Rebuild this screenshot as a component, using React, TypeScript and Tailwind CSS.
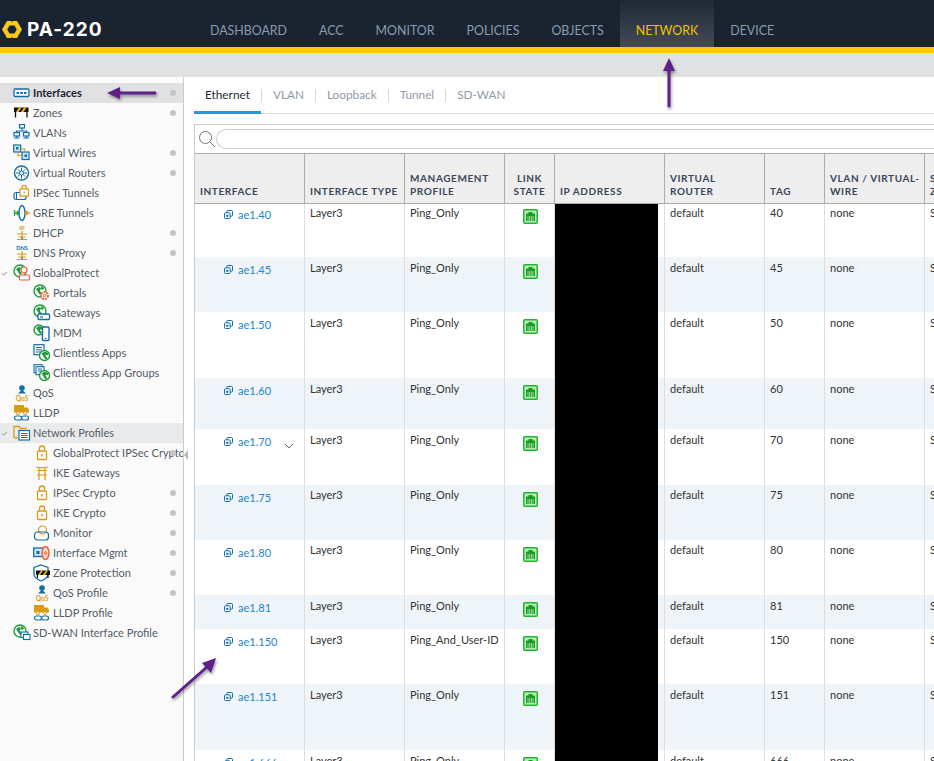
import type { ReactNode } from "react";

const BLUE = "#0f6ea6";
const GOLD = "#d99a14";
const GREEN = "#1f9b3c";
const RED = "#ee5f33";

const NAV = ["DASHBOARD", "ACC", "MONITOR", "POLICIES", "OBJECTS", "NETWORK", "DEVICE"];
const TABS = ["Ethernet", "VLAN", "Loopback", "Tunnel", "SD-WAN"];

function Ico({ children }: { children: ReactNode }) {
  return (
    <svg viewBox="0 0 18 18" width="18" height="18" fill="none" className="shrink-0">
      {children}
    </svg>
  );
}

const Globe = ({ x = 7, y = 7, r = 6 }: { x?: number; y?: number; r?: number }) => (
  <>
    <circle cx={x} cy={y} r={r} fill="#fff" stroke={GREEN} strokeWidth="1.4" />
    <path d={`M${x - r + 2} ${y - 2}l3-2 2 1-1 3 2 3-2 1-2-3z`} fill={GREEN} />
    <path d={`M${x + 1} ${y - r + 1}l3 2-1 2-2-1z`} fill={GREEN} />
  </>
);

const Lock = () => (
  <Ico>
    <rect x="4.5" y="7" width="9" height="8.5" rx="1" stroke={GOLD} strokeWidth="1.3" fill="#fff" />
    <path d="M6.5 7V4.5a2.5 2.5 0 0 1 5 0V7" stroke={GOLD} strokeWidth="1.3" />
    <rect x="8.2" y="10" width="1.6" height="2.5" fill={GOLD} />
  </Ico>
);

const Truck = () => (
  <Ico>
    <rect x="1" y="1" width="10" height="7.5" fill={GOLD} />
    <path d="M11 3.5h3.5L16 6v2.5h-5z" fill={GOLD} />
    <circle cx="5" cy="9" r="1.5" fill="#fff" stroke={GOLD} />
    <circle cx="12" cy="9" r="1.5" fill="#fff" stroke={GOLD} />
    <rect x="1.5" y="12" width="7" height="4" rx="2" stroke={BLUE} strokeWidth="1.2" />
    <rect x="8.5" y="12" width="7" height="4" rx="2" stroke={BLUE} strokeWidth="1.2" />
  </Ico>
);

const QosIcon = () => (
  <Ico>
    <circle cx="9" cy="4" r="2.8" fill={BLUE} />
    <path d="M5 9.5l4-4 4 4z" fill={BLUE} />
    <text x="9" y="16.5" textAnchor="middle" fontSize="6.5" fontWeight="700" fill={GOLD} fontFamily="Lato">
      QoS
    </text>
  </Ico>
);

const NetTree = ({ label }: { label: string }) => (
  <Ico>
    <text x="9" y="6" textAnchor="middle" fontSize={label.length > 2 ? 5.6 : 6} fontWeight="700" fill={label.length > 2 ? BLUE : GOLD} fontFamily="Lato">
      {label}
    </text>
    <path d="M9 7v3M4 10h10M9 10v3M4 15.5h10M5.5 13h7" stroke={GOLD} strokeWidth="1.2" />
    <path d="M9 13v2.5" stroke={BLUE} strokeWidth="1.2" />
  </Ico>
);

type NavRow = { label: string; level: 1 | 2; dot?: boolean; chevron?: boolean; bg?: string; bold?: boolean; icon: ReactNode };

const SIDE: NavRow[] = [
  {
    label: "Interfaces",
    level: 1,
    dot: true,
    bold: true,
    bg: "bg-[#e0e1e3]",
    icon: (
      <Ico>
        <rect x="1" y="5" width="15" height="7.5" rx="1.2" stroke={BLUE} strokeWidth="1.3" fill="#fff" />
        <path d="M3.5 8h2.5v2H3.5zM7.3 8h2.5v2H7.3zM11 8h2.5v2H11z" fill={BLUE} />
      </Ico>
    ),
  },
  {
    label: "Zones",
    level: 1,
    dot: true,
    icon: (
      <Ico>
        <rect x="1" y="3.5" width="14.5" height="4.5" fill="#111" />
        <path d="M3 8L6 3.5h2.5L5.5 8zM8 8l3-4.5h2.5L10.5 8z" fill="#f2b90f" />
        <path d="M2.5 8v5.5M14 8v5.5" stroke="#111" strokeWidth="1.3" />
      </Ico>
    ),
  },
  {
    label: "VLANs",
    level: 1,
    icon: (
      <Ico>
        <rect x="6.5" y="0.5" width="5" height="3.5" stroke={BLUE} strokeWidth="1.2" />
        <rect x="1" y="8.5" width="5.5" height="3.5" stroke={BLUE} strokeWidth="1.2" />
        <rect x="10.5" y="8.5" width="5.5" height="3.5" stroke={BLUE} strokeWidth="1.2" />
        <path d="M9 4v3M3.5 8V7h10v1M1 14h5.5M3.7 12v2M10.5 14H16M13.2 12v2" stroke={BLUE} strokeWidth="1.1" />
      </Ico>
    ),
  },
  {
    label: "Virtual Wires",
    level: 1,
    dot: true,
    icon: (
      <Ico>
        <rect x="0.7" y="1" width="7" height="7" fill="#cfe4f3" stroke={BLUE} strokeWidth="1.2" />
        <rect x="9" y="8" width="7" height="7.5" fill="#cfe4f3" stroke={BLUE} strokeWidth="1.2" />
        <path d="M7.7 5h4v3M8.5 11.5H5V8" stroke={GOLD} strokeWidth="1.1" />
        <rect x="3" y="3" width="2.5" height="2.5" fill={BLUE} />
        <rect x="11.5" y="10.5" width="2.5" height="2.5" fill={BLUE} />
      </Ico>
    ),
  },
  {
    label: "Virtual Routers",
    level: 1,
    dot: true,
    icon: (
      <Ico>
        <circle cx="8.5" cy="9" r="7" stroke={BLUE} strokeWidth="1.4" fill="#fff" />
        <path d="M8.5 3.5v11M3 9h11M4.8 5.3l7.4 7.4M12.2 5.3l-7.4 7.4" stroke={BLUE} strokeWidth="1" />
        <circle cx="8.5" cy="9" r="2" fill="#fff" stroke={BLUE} />
      </Ico>
    ),
  },
  {
    label: "IPSec Tunnels",
    level: 1,
    icon: (
      <Ico>
        <rect x="1" y="8.5" width="12" height="7" rx="2" stroke={BLUE} strokeWidth="1.2" />
        <path d="M3.5 8.5v7" stroke={BLUE} />
        <rect x="7" y="5" width="8.5" height="7" fill="#fff" stroke={GOLD} strokeWidth="1.2" />
        <path d="M9 5V3.5a2.2 2.2 0 0 1 4.4 0V5" stroke={GOLD} strokeWidth="1.2" />
        <rect x="10.5" y="7.5" width="1.3" height="2" fill={GOLD} />
      </Ico>
    ),
  },
  {
    label: "GRE Tunnels",
    level: 1,
    icon: (
      <Ico>
        <ellipse cx="9" cy="9" rx="3" ry="7.5" stroke={BLUE} strokeWidth="1.4" />
        <path d="M1 9h5M4 7l2 2-2 2" stroke={GREEN} strokeWidth="1.5" />
        <path d="M17 9h-4.5M14.5 7l-2 2 2 2" stroke={GOLD} strokeWidth="1.5" />
        <path d="M1.5 6v6" stroke={GREEN} strokeWidth="1.2" />
      </Ico>
    ),
  },
  { label: "DHCP", level: 1, dot: true, icon: <NetTree label="IP" /> },
  { label: "DNS Proxy", level: 1, dot: true, icon: <NetTree label="DNS" /> },
  {
    label: "GlobalProtect",
    level: 1,
    chevron: true,
    icon: (
      <Ico>
        <Globe />
        <circle cx="11" cy="6" r="3" fill="#fff" stroke={RED} strokeWidth="1.2" />
        <rect x="6.5" y="11" width="10" height="5" rx="1" fill="#fff" stroke={RED} strokeWidth="1.2" />
      </Ico>
    ),
  },
  {
    label: "Portals",
    level: 2,
    icon: (
      <Ico>
        <Globe />
        <circle cx="11.5" cy="11.5" r="3.5" fill="#fff" stroke={RED} strokeWidth="2" strokeDasharray="2 1" />
        <circle cx="11.5" cy="11.5" r="1.2" stroke={RED} />
      </Ico>
    ),
  },
  {
    label: "Gateways",
    level: 2,
    icon: (
      <Ico>
        <Globe />
        <rect x="5" y="10" width="11.5" height="5.5" rx="1" fill="#fff" stroke={BLUE} strokeWidth="1.3" />
        <path d="M7 13h3" stroke={BLUE} strokeWidth="1.2" />
      </Ico>
    ),
  },
  {
    label: "MDM",
    level: 2,
    icon: (
      <Ico>
        <Globe x={6} y={6} r={5} />
        <rect x="9.5" y="3" width="6.5" height="13.5" rx="1" fill="#fff" stroke={BLUE} strokeWidth="1.4" />
        <path d="M12 14.5h1.5" stroke={BLUE} />
      </Ico>
    ),
  },
  {
    label: "Clientless Apps",
    level: 2,
    icon: (
      <Ico>
        <rect x="1" y="0.7" width="10" height="10" fill="#fff" stroke={BLUE} strokeWidth="1.2" />
        <path d="M3 3.5h6M3 5.8h6M3 8h6" stroke={BLUE} />
        <Globe x={11.5} y={11.5} r={5} />
      </Ico>
    ),
  },
  {
    label: "Clientless App Groups",
    level: 2,
    icon: (
      <Ico>
        <rect x="1" y="0.7" width="8" height="8" fill="#fff" stroke={BLUE} strokeWidth="1.1" />
        <rect x="3" y="2.7" width="8" height="8" fill="#fff" stroke={BLUE} strokeWidth="1.1" />
        <path d="M5 5h4M5 7h4" stroke={BLUE} />
        <Globe x={11.5} y={11.5} r={5} />
      </Ico>
    ),
  },
  { label: "QoS", level: 1, icon: <QosIcon /> },
  { label: "LLDP", level: 1, icon: <Truck /> },
  {
    label: "Network Profiles",
    level: 1,
    chevron: true,
    bg: "bg-[#e9eaeb]",
    icon: (
      <Ico>
        <path d="M1 14V2.5h5l1.5 2h6" stroke={GOLD} strokeWidth="1.3" />
        <path d="M1 14h4" stroke={GOLD} strokeWidth="1.3" />
        <rect x="6" y="6.5" width="10.5" height="9.5" fill="#fff" stroke={BLUE} strokeWidth="1.2" />
        <path d="M8 9.5h6.5M8 11.5h6.5M8 13.5h6.5" stroke={BLUE} />
      </Ico>
    ),
  },
  { label: "GlobalProtect IPSec Crypto", level: 2, dot: true, icon: <Lock /> },
  {
    label: "IKE Gateways",
    level: 2,
    icon: (
      <Ico>
        <path d="M3 3c4 1 8 1 12 0M4.5 6.5h9M6 3.5V16M12 3.5V16M4 11h10" stroke={GOLD} strokeWidth="1.2" />
      </Ico>
    ),
  },
  { label: "IPSec Crypto", level: 2, dot: true, icon: <Lock /> },
  { label: "IKE Crypto", level: 2, dot: true, icon: <Lock /> },
  {
    label: "Monitor",
    level: 2,
    dot: true,
    icon: (
      <Ico>
        <circle cx="9.5" cy="6" r="4" fill="#fff" stroke={GOLD} strokeWidth="1.2" />
        <rect x="1.5" y="8" width="14" height="8" rx="3" stroke={BLUE} strokeWidth="1.2" />
      </Ico>
    ),
  },
  {
    label: "Interface Mgmt",
    level: 2,
    dot: true,
    icon: (
      <Ico>
        <rect x="0.7" y="4" width="10" height="8.5" fill="#cfe4f3" stroke={BLUE} strokeWidth="1.3" />
        <rect x="3.5" y="7" width="3" height="3" fill={BLUE} />
        <ellipse cx="12.5" cy="9" rx="3.5" ry="6.5" fill="#fbd9cd" stroke={RED} strokeWidth="1.4" />
        <circle cx="12.5" cy="9" r="1.3" stroke={RED} />
      </Ico>
    ),
  },
  {
    label: "Zone Protection",
    level: 2,
    dot: true,
    icon: (
      <Ico>
        <path d="M8 1l7 2.5v6c0 3.5-3 6-7 7.5-4-1.5-7-4-7-7.5v-6z" fill="#fff" stroke={BLUE} strokeWidth="1.3" />
        <rect x="3" y="6.5" width="14" height="4.5" fill="#111" />
        <path d="M5 11l3-4.5h2L7 11zM10 11l3-4.5h2L12 11z" fill="#f2b90f" />
        <path d="M4.5 11v3M15 11v3" stroke="#111" strokeWidth="1.2" />
      </Ico>
    ),
  },
  { label: "QoS Profile", level: 2, dot: true, icon: <QosIcon /> },
  { label: "LLDP Profile", level: 2, icon: <Truck /> },
  {
    label: "SD-WAN Interface Profile",
    level: 1,
    icon: (
      <Ico>
        <Globe />
        <rect x="8" y="8" width="7" height="5.5" fill="#fff" stroke={BLUE} strokeWidth="1.1" />
        <rect x="10.5" y="10.5" width="6.5" height="5" fill="#fff" stroke={BLUE} strokeWidth="1.1" />
      </Ico>
    ),
  },
];

const COLS = [
  { w: "w-[110px]", head: ["INTERFACE"] },
  { w: "w-[100px]", head: ["INTERFACE TYPE"] },
  { w: "w-[100px]", head: ["MANAGEMENT", "PROFILE"] },
  { w: "w-[50px]", head: ["LINK", "STATE"], center: true },
  { w: "w-[110px]", head: ["IP ADDRESS"] },
  { w: "w-[100px]", head: ["VIRTUAL", "ROUTER"] },
  { w: "w-[60px]", head: ["TAG"] },
  { w: "w-[100px]", head: ["VLAN / VIRTUAL-", "WIRE"] },
  { w: "w-[100px]", head: ["SECURITY", "ZONE"] },
];

const ROWS = [
  { name: "ae1.40", tag: "40", h: "h-[53px]", profile: "Ping_Only", first: true },
  { name: "ae1.45", tag: "45", h: "h-[55px]", profile: "Ping_Only" },
  { name: "ae1.50", tag: "50", h: "h-[66px]", profile: "Ping_Only" },
  { name: "ae1.60", tag: "60", h: "h-[51px]", profile: "Ping_Only" },
  { name: "ae1.70", tag: "70", h: "h-[56px]", profile: "Ping_Only", chevron: true },
  { name: "ae1.75", tag: "75", h: "h-[55px]", profile: "Ping_Only", up: true },
  { name: "ae1.80", tag: "80", h: "h-[55px]", profile: "Ping_Only", up: true },
  { name: "ae1.81", tag: "81", h: "h-[34px]", profile: "Ping_Only" },
  { name: "ae1.150", tag: "150", h: "h-[55px]", profile: "Ping_And_User-ID" },
  { name: "ae1.151", tag: "151", h: "h-[66px]", profile: "Ping_Only" },
  { name: "ae1.666", tag: "666", h: "h-[55px]", profile: "Ping_Only" },
];

function PortIcon() {
  return (
    <svg viewBox="0 0 15 15" width="15" height="15" className="shrink-0">
      <rect x="0.75" y="0.75" width="13.5" height="13.5" rx="1" fill="#b8eeb8" stroke="#22b52e" strokeWidth="1.5" />
      <path d="M5.5 3h4v1.5H12V12H3V4.5h2.5z" fill="#1a9c24" />
      <path d="M5 7v5M6.7 7v5M8.4 7v5M10.1 7v5" stroke="#c7f2c7" strokeWidth="0.7" />
    </svg>
  );
}

function SubIfIcon() {
  return (
    <svg viewBox="0 0 9 9" width="9" height="9" fill="none" className="shrink-0">
      <rect x="2.8" y="0.5" width="5.7" height="5.7" rx="1" stroke={BLUE} />
      <rect x="0.5" y="2.8" width="5.7" height="5.7" rx="1" fill="#fff" stroke={BLUE} />
      <rect x="2.2" y="4.8" width="2.2" height="2" fill={BLUE} />
    </svg>
  );
}

function Cell({ w, children, pad }: { w: string; children?: ReactNode; pad: string }) {
  return <div className={`${w} shrink-0 border-r border-[#dcdfe2] pl-[5px] ${pad}`}>{children}</div>;
}

function Arrow({ className, line, head }: { className: string; line: string; head: string }) {
  return (
    <svg viewBox="0 0 60 60" width="60" height="60" className={`absolute drop-shadow-[1px_2px_1.5px_rgba(0,0,0,0.4)] ${className}`}>
      <path d={line} stroke="#5f2088" strokeWidth="3" strokeLinecap="round" fill="none" />
      <path d={head} fill="#5f2088" />
    </svg>
  );
}

export default function App() {
  return (
    <div className="relative flex h-screen w-full flex-col overflow-hidden bg-white font-['Lato','Liberation_Sans',sans-serif] text-[#333]">
      <header className="flex h-[47px] shrink-0 bg-[#1a2431]">
        <div className="flex w-[194px] shrink-0 items-center pt-[11px] pl-[2px]">
          <svg viewBox="0 0 20 17" width="20" height="17" className="shrink-0">
            <path
              fillRule="evenodd"
              d="M0 8.5L5 0h4.4l.6 1.5.6-1.5H15l5 8.5-5 8.5h-4.4l-.6-1.5-.6 1.5H5zM7.5 4.5L5.2 8.5l2.3 4h5l2.3-4-2.3-4z"
              fill="#fac81e"
            />
          </svg>
          <span className="ml-[5px] font-['Inter',sans-serif] text-[19px] leading-none font-bold tracking-[1px] text-white">PA-220</span>
        </div>
        {NAV.map((n) =>
          n === "NETWORK" ? (
            <div key={n} className="flex items-center bg-gradient-to-b from-[#1f2936] to-[#434b57] px-4 pt-[16px] text-[12.4px] text-[#f0c000]">
              {n}
            </div>
          ) : (
            <div key={n} className="flex items-center px-4 pt-[16px] text-[12.4px] text-[#8b9bb0]">
              {n}
            </div>
          ),
        )}
      </header>
      <div className="h-[6px] shrink-0 bg-[#ffc800]" />
      <div className="h-[24px] shrink-0 bg-[#e0e1e3]" />

      <div className="flex min-h-0 flex-1">
        <aside className="relative w-[184px] shrink-0 border-r border-[#c9cbcd] bg-[#fafafa] pt-[6px] text-[11px] text-[#525c66]">
          {SIDE.map((r) => (
            <div key={r.label} className={`relative flex h-[20px] items-center ${r.bg ?? ""} ${r.level === 1 ? "pl-[13px]" : "pl-[33px]"}`}>
              {r.chevron && (
                <svg viewBox="0 0 8 6" width="7" height="5" fill="none" className="absolute left-[1px] top-[8px]">
                  <path d="M1 3l2 2 4-4" stroke="#777" />
                </svg>
              )}
              {r.icon}
              <span className={`ml-[2px] overflow-hidden pr-[1px] whitespace-nowrap ${r.bold ? "font-bold text-[#1a2431]" : ""}`}>{r.label}</span>
              {r.dot && <span className="absolute left-[170px] top-[7px] size-[6px] rounded-full bg-[#c4c5c7]" />}
            </div>
          ))}
          <span className="absolute -right-[5px] top-[373px] h-0 w-0 border-y-[5px] border-r-[4px] border-y-transparent border-r-[#b5b7b9]" />
        </aside>

        <main className="min-w-0 flex-1 overflow-hidden">
          <div className="ml-[10px] flex h-[37px] border-b border-[#dcdee0] text-[11.8px] text-[#8f99a6]">
            {TABS.map((t, i) => (
              <div key={t} className="relative flex items-center">
                {i === 0 ? (
                  <span className="flex h-[37px] items-center border-b-[3px] border-[#1b9fdc] px-[11px] pt-[3px] text-[#1e2a38]">{t}</span>
                ) : (
                  <span className="px-[11px]">{t}</span>
                )}
                {i < TABS.length - 1 && <span className="h-[13px] w-px bg-[#d5d7d9]" />}
              </div>
            ))}
          </div>

          <div className="mt-[10px] ml-[10px] w-[830px] border-t border-l border-[#c9cbcd]">
            <div className="flex h-[28px] items-center pl-[3px]">
              <svg viewBox="0 0 18 18" width="18" height="18" fill="none" className="shrink-0">
                <circle cx="7.5" cy="7.5" r="6" stroke="#6f7478" />
                <path d="M12 12l5 5" stroke="#6f7478" />
              </svg>
              <div className="h-[20px] flex-1 rounded-l-full border border-r-0 border-[#c9cbcd]" />
            </div>
            <div className="flex h-[51px] border-t border-b border-[#a9abad] bg-[#eeeeef] text-[10px] leading-[13px] font-bold tracking-[0.6px] text-[#3b4658]">
              {COLS.map((c) => (
                <div key={c.head[0]} className={`${c.w} flex shrink-0 flex-col justify-end border-r border-[#a9abad] pb-[5px] ${c.center ? "items-center" : "pl-[5px]"}`}>
                  {c.head.map((h) => (
                    <span key={h} className="whitespace-nowrap">
                      {h}
                    </span>
                  ))}
                </div>
              ))}
            </div>
            {ROWS.map((r, i) => {
              const pad = r.first ? "pt-[1px]" : r.up ? "pt-[2px]" : "pt-[3px]";
              return (
                <div key={r.name} className={`flex text-[11px] text-[#333] ${r.h} ${i % 2 ? "bg-[#eef4f8]" : "bg-white"}`}>
                  <div className={`relative flex w-[110px] shrink-0 items-start gap-[5px] border-r border-[#dcdfe2] pl-[29px] text-[#1a86d0] ${r.first ? "pt-[3px]" : "pt-[5px]"}`}>
                    <span className="pt-[3px]">
                      <SubIfIcon />
                    </span>
                    {r.name}
                    {r.chevron && (
                      <svg viewBox="0 0 10 6" width="10" height="6" fill="none" className="absolute left-[89px] top-[14px]">
                        <path d="M1 1l4 4 4-4" stroke="#666" />
                      </svg>
                    )}
                  </div>
                  <Cell w="w-[100px]" pad={pad}>
                    Layer3
                  </Cell>
                  <Cell w="w-[100px]" pad={pad}>
                    {r.profile}
                  </Cell>
                  <div className={`flex w-[50px] shrink-0 justify-center border-r border-[#dcdfe2] pl-[2px] ${r.first ? "pt-[5px]" : "pt-[7px]"}`}>
                    <PortIcon />
                  </div>
                  <div className="w-[110px] shrink-0 border-r border-[#dcdfe2]">
                    <div className="h-full w-[103px] bg-black" />
                  </div>
                  <Cell w="w-[100px]" pad={pad}>
                    default
                  </Cell>
                  <Cell w="w-[60px]" pad={pad}>
                    {r.tag}
                  </Cell>
                  <Cell w="w-[100px]" pad={pad}>
                    none
                  </Cell>
                  <Cell w="w-[100px]" pad={pad}>
                    Servers
                  </Cell>
                </div>
              );
            })}
          </div>
        </main>
      </div>

      <Arrow className="left-[103px] top-[63px]" line="M52 30H14" head="M4 30l13-6v12z" />
      <Arrow className="left-[639px] top-[52px]" line="M30 54V16" head="M30 6l6 13H24z" />
      <Arrow className="left-[165px] top-[645px]" line="M8 52L42 22" head="M51 13l-5 15-9-10z" />
    </div>
  );
}
